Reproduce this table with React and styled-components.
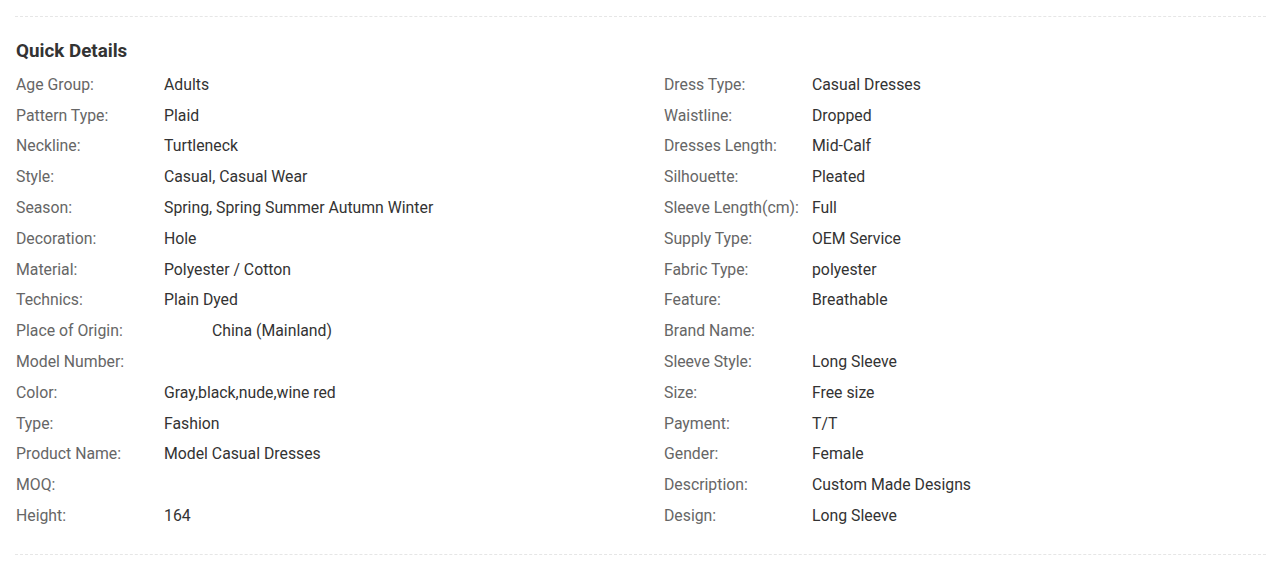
import styled, { createGlobalStyle } from "styled-components";

const GlobalStyle = createGlobalStyle`
  body {
    margin: 0;
    background: #fff;
    font-family: Roboto, "Liberation Sans", Arial, sans-serif;
  }
`;

const Page = styled.div`
  padding: 16px 22px 0 15px;
`;

const Section = styled.section`
  border-top: 1px dashed #e6e6e6;
  border-bottom: 1px dashed #e6e6e6;
  padding: 24px 0 23px 1px;
`;

const Title = styled.h3`
  margin: 0 0 8px;
  font-size: 18.8px;
  line-height: 20px;
  font-weight: 700;
  color: #333;
`;

const Grid = styled.div`
  display: grid;
  grid-template-columns: 648px 1fr;
`;

const Row = styled.div`
  display: flex;
  height: 30.8px;
  align-items: center;
  font-size: 15.8px;
`;

const Label = styled.span`
  width: 148px;
  flex-shrink: 0;
  color: #666;
`;

const Value = styled.span`
  color: #333;
  padding-left: ${(p) => (p.$indent ? "48px" : "0")};
`;

const left = [
  ["Age Group:", "Adults"],
  ["Pattern Type:", "Plaid"],
  ["Neckline:", "Turtleneck"],
  ["Style:", "Casual, Casual Wear"],
  ["Season:", "Spring, Spring Summer Autumn Winter"],
  ["Decoration:", "Hole"],
  ["Material:", "Polyester / Cotton"],
  ["Technics:", "Plain Dyed"],
  ["Place of Origin:", "China (Mainland)", true],
  ["Model Number:", ""],
  ["Color:", "Gray,black,nude,wine red"],
  ["Type:", "Fashion"],
  ["Product Name:", "Model Casual Dresses"],
  ["MOQ:", ""],
  ["Height:", "164"],
];

const right = [
  ["Dress Type:", "Casual Dresses"],
  ["Waistline:", "Dropped"],
  ["Dresses Length:", "Mid-Calf"],
  ["Silhouette:", "Pleated"],
  ["Sleeve Length(cm):", "Full"],
  ["Supply Type:", "OEM Service"],
  ["Fabric Type:", "polyester"],
  ["Feature:", "Breathable"],
  ["Brand Name:", ""],
  ["Sleeve Style:", "Long Sleeve"],
  ["Size:", "Free size"],
  ["Payment:", "T/T"],
  ["Gender:", "Female"],
  ["Description:", "Custom Made Designs"],
  ["Design:", "Long Sleeve"],
];

export default function App() {
  const rows = [];
  left.forEach((l, i) => {
    const r = right[i];
    rows.push(
      <Row key={"l" + i}>
        <Label>{l[0]}</Label>
        <Value $indent={l[2]}>{l[1]}</Value>
      </Row>
    );
    rows.push(
      <Row key={"r" + i}>
        <Label>{r[0]}</Label>
        <Value>{r[1]}</Value>
      </Row>
    );
  });

  return (
    <>
      <GlobalStyle />
      <Page>
        <Section>
          <Title>Quick Details</Title>
          <Grid>{rows}</Grid>
        </Section>
      </Page>
    </>
  );
}
